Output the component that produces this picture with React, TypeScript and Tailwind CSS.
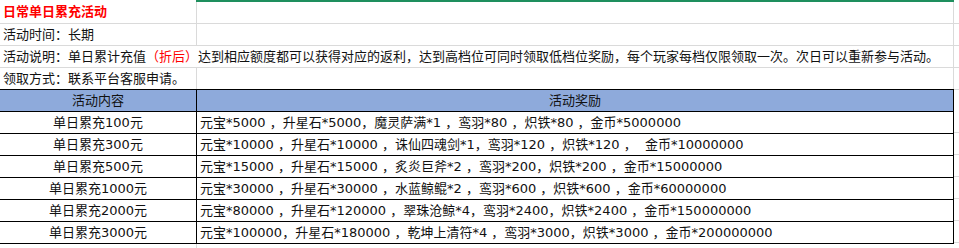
import React from 'react';

const rewards: [string, string][] = [
  ['单日累充100元', '元宝*5000 ，升星石*5000，魔灵萨满*1 ，鸾羽*80 ，炽铁*80 ，金币*5000000'],
  ['单日累充300元', '元宝*10000 ，升星石*10000 ，诛仙四魂剑*1，鸾羽*120 ，炽铁*120 ，  金币*10000000'],
  ['单日累充500元', '元宝*15000 ，升星石*15000 ，炙炎巨斧*2 ，鸾羽*200，炽铁*200 ，金币*15000000'],
  ['单日累充1000元', '元宝*30000 ，升星石*30000 ，水蓝鲸鲲*2 ，鸾羽*600 ，炽铁*600 ，金币*60000000'],
  ['单日累充2000元', '元宝*80000 ，升星石*120000 ，翠珠沧鲸*4，鸾羽*2400，炽铁*2400 ，金币*150000000'],
  ['单日累充3000元', '元宝*100000，升星石*180000 ，乾坤上清符*4 ，鸾羽*3000，炽铁*3000 ，金币*200000000'],
];

function InfoRow({
  children,
  first = false,
  hideDivider = false,
  last = false,
}: {
  children: React.ReactNode;
  first?: boolean;
  hideDivider?: boolean;
  last?: boolean;
}) {
  const bottom = last ? '' : 'border-b border-[#dadada]';
  return (
    <div className={`flex ${first ? 'h-[24px]' : last ? 'h-[21px]' : 'h-[22px]'}`}>
      <div
        className={`w-[197px] shrink-0 flex items-center pl-[3px] whitespace-nowrap overflow-visible relative z-10 ${bottom} ${
          hideDivider ? '' : 'border-r border-[#dadada]'
        }`}
      >
        {children}
      </div>
      <div className={`w-[757px] shrink-0 border-r border-[#dadada] ${bottom}`} />
      <div className={`flex-1 ${bottom}`} />
    </div>
  );
}

export default function App() {
  return (
    <div
      className="relative w-[959px] h-[248px] overflow-hidden bg-white text-[13px] text-[#111] leading-none"
      style={{ fontFamily: '"DejaVu Sans", "Noto Sans CJK SC", sans-serif' }}
    >
      {/* selected column highlight */}
      <div className="absolute left-[196px] top-0 w-[758px] h-[2px] bg-[#1e8f5e] z-20" />

      <InfoRow first>
        <span className="font-bold text-[#ff0000]">日常单日累充活动</span>
      </InfoRow>
      <InfoRow>活动时间：长期</InfoRow>
      <InfoRow hideDivider>
        活动说明：单日累计充值<span className="text-[#ff0000]">（折后）</span>
        达到相应额度都可以获得对应的返利，达到高档位可同时领取低档位奖励，每个玩家每档仅限领取一次。次日可以重新参与活动。
      </InfoRow>
      <InfoRow last>领取方式：联系平台客服申请。</InfoRow>

      <div className="flex">
        <div className="w-[954px] shrink-0 border-t border-black">
          <div className="flex h-[22px] bg-[#8eaadb] border-b border-black">
            <div className="w-[197px] shrink-0 border-r border-black flex items-center justify-center">
              活动内容
            </div>
            <div className="w-[757px] shrink-0 border-r border-black flex items-center justify-center">
              活动奖励
            </div>
          </div>
          {rewards.map(([tier, items]) => (
            <div key={tier} className="flex h-[22px] border-b border-black">
              <div className="w-[197px] shrink-0 border-r border-black flex items-center justify-center">
                {tier}
              </div>
              <div className="w-[757px] shrink-0 border-r border-black flex items-center pl-[3px] whitespace-pre">
                {items}
              </div>
            </div>
          ))}
          <div className="flex h-[22px]">
            <div className="w-[197px] shrink-0 border-r border-[#dadada]" />
          </div>
        </div>
        <div className="flex-1 border-t border-[#dadada] pt-[21px]">
          {rewards.concat([['', '']]).map((r, i) => (
            <div key={i} className="h-[22px] border-b border-[#dadada]" />
          ))}
        </div>
      </div>
    </div>
  );
}
